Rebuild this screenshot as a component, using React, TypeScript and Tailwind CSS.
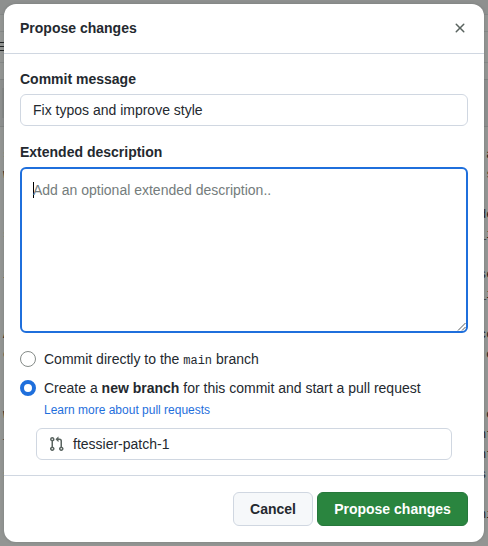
import React from "react";

const editorLines: [string, string][] = [
  ["", "'"],
  ["s", " a"],
  ["w", "'s"],
  ["", ""],
  ["l", "de"],
  ["s", "_i"],
  ["l", "'"],
  ["i", "se"],
  ["", "_i"],
  ["", ""],
  ["A", "co"],
  ["e", " o"],
  ["l", ""],
  ["", ""],
  ["w", " o"],
  ["_", "nt"],
  ["", "nt"],
  ["s", "s"],
  ["", ""],
  ["", "ni"],
];

function Backdrop() {
  return (
    <div aria-hidden="true" className="flex h-full w-full flex-col bg-[#939593] text-[#171a1c]">
      <div className="h-[15px] shrink-0 border-b border-[#858887] bg-[#8e908f]" />
      <div className="h-[17px] shrink-0 border-b border-[#858887]" />
      <div className="flex h-[31px] shrink-0 flex-col gap-[3px] border-b border-[#858887] pt-[10px]">
        <div className="h-px w-2 bg-[#202324]" />
        <div className="h-px w-2 bg-[#202324]" />
        <div className="h-px w-2 bg-[#202324]" />
      </div>
      <div className="h-[17px] shrink-0 border-b border-[#808382]" />
      <div className="h-[47px] shrink-0 border-b border-[#808382] bg-[#8d8f8e] pt-2 pl-[2px]">
        <div className="h-[30px] w-2 bg-[#858786]" />
      </div>
      <div className="-mt-0.5 flex flex-col font-['Liberation_Mono',monospace] text-[12px] leading-5">
        {editorLines.map(([left, right], i) => (
          <div key={i} className="flex h-5 justify-between whitespace-pre pl-[3px]">
            <span>{left}</span>
            <span className="w-[9px]">{right}</span>
          </div>
        ))}
      </div>
    </div>
  );
}

function CloseIcon() {
  return (
    <svg width="16" height="16" viewBox="0 0 16 16" fill="currentColor">
      <path d="M3.72 3.72a.75.75 0 0 1 1.06 0L8 6.94l3.22-3.22a.75.75 0 1 1 1.06 1.06L9.06 8l3.22 3.22a.75.75 0 1 1-1.06 1.06L8 9.06l-3.22 3.22a.75.75 0 0 1-1.06-1.06L6.94 8 3.72 4.78a.75.75 0 0 1 0-1.06Z" />
    </svg>
  );
}

function PullRequestIcon() {
  return (
    <svg width="16" height="16" viewBox="0.5 0 16 16" fill="currentColor">
      <path d="M1.5 3.25a2.25 2.25 0 1 1 3 2.122v5.256a2.251 2.251 0 1 1-1.5 0V5.372A2.25 2.25 0 0 1 1.5 3.25Zm5.677-.177L9.573.677A.25.25 0 0 1 10 .854V2.5h1A2.5 2.5 0 0 1 13.5 5v5.628a2.251 2.251 0 1 1-1.5 0V5a1 1 0 0 0-1-1h-1v1.646a.25.25 0 0 1-.427.177L7.177 3.427a.25.25 0 0 1 0-.354ZM3.75 2.5a.75.75 0 1 0 0 1.5.75.75 0 0 0 0-1.5Zm0 9.5a.75.75 0 1 0 0 1.5.75.75 0 0 0 0-1.5Zm8.25.75a.75.75 0 1 0 1.5 0 .75.75 0 0 0-1.5 0Z" />
    </svg>
  );
}

export default function App() {
  return (
    <div className="relative h-[546px] w-[488px] overflow-hidden font-['Liberation_Sans',sans-serif] text-sm leading-5 text-[#24292f]">
      <Backdrop />
      <section
        role="dialog"
        className="absolute inset-1 flex flex-col overflow-hidden rounded-xl bg-white shadow-[0_0_3px_rgba(70,80,80,0.3)]"
      >
        <header className="flex h-[50px] shrink-0 items-center justify-between border-b border-[#d0d7e1] px-4 pb-px">
          <h1 className="font-bold">Propose changes</h1>
          <button aria-label="Close" className="text-[#59635f]">
            <CloseIcon />
          </button>
        </header>
        <main className="flex h-[421px] shrink-0 flex-col px-4 pt-[15px]">
          <label htmlFor="message" className="font-bold">Commit message</label>
          <input
            id="message"
            defaultValue="Fix typos and improve style"
            className="mt-[5px] h-8 shrink-0 rounded-md border border-[#d0d7e1] px-3 outline-none"
          />
          <label htmlFor="description" className="mt-4 font-bold">Extended description</label>
          <div className="relative mt-[5px] h-[166px] shrink-0 rounded-md border-2 border-[#1f6fdc] px-[11px] py-[11px]">
            <div id="description" className="flex items-center text-[#747c7c]">
              <span className="-mr-px h-4 w-px bg-black" />
              <span>Add an optional extended description..</span>
            </div>
            <svg className="absolute right-0 bottom-0" width="9" height="9" viewBox="0 0 9 9" stroke="#555a5e" fill="none">
              <path d="M1 8.5 8.5 1M5 8.5 8.5 5" />
            </svg>
          </div>
          <label className="mt-4 flex h-5 shrink-0 items-center">
            <span className="mr-2 size-4 rounded-full border border-[#858b88]" />
            <span className="pt-0.5">
              Commit directly to the <code className="font-['Liberation_Mono',monospace] text-[12px]">main</code> branch
            </span>
          </label>
          <label className="mt-[9px] flex h-5 shrink-0 items-center">
            <span className="mr-2 size-4 rounded-full border-4 border-[#1f6fdc]" />
            <span>
              Create a <b>new branch</b> for this commit and start a pull request
            </span>
          </label>
          <a className="mt-[3px] ml-6 text-xs leading-[18px] text-[#1f6fdc]">Learn more about pull requests</a>
          <div className="mx-4 mt-[9px] flex h-8 shrink-0 items-center rounded-md border border-[#d0d7e1] pl-3">
            <span className="mr-2 text-[#59635f]">
              <PullRequestIcon />
            </span>
            <span>ftessier-patch-1</span>
          </div>
        </main>
        <footer className="flex flex-1 items-center justify-end gap-1 border-t border-[#d0d7e1] px-4 font-bold">
          <button className="h-[34px] w-20 rounded-md border border-[#d0d7e1] bg-[#f6f8fa] text-[#24292f]">Cancel</button>
          <button className="h-[34px] w-[151px] rounded-md border border-[#26783c] bg-[#2a853f] text-white">Propose changes</button>
        </footer>
      </section>
    </div>
  );
}
